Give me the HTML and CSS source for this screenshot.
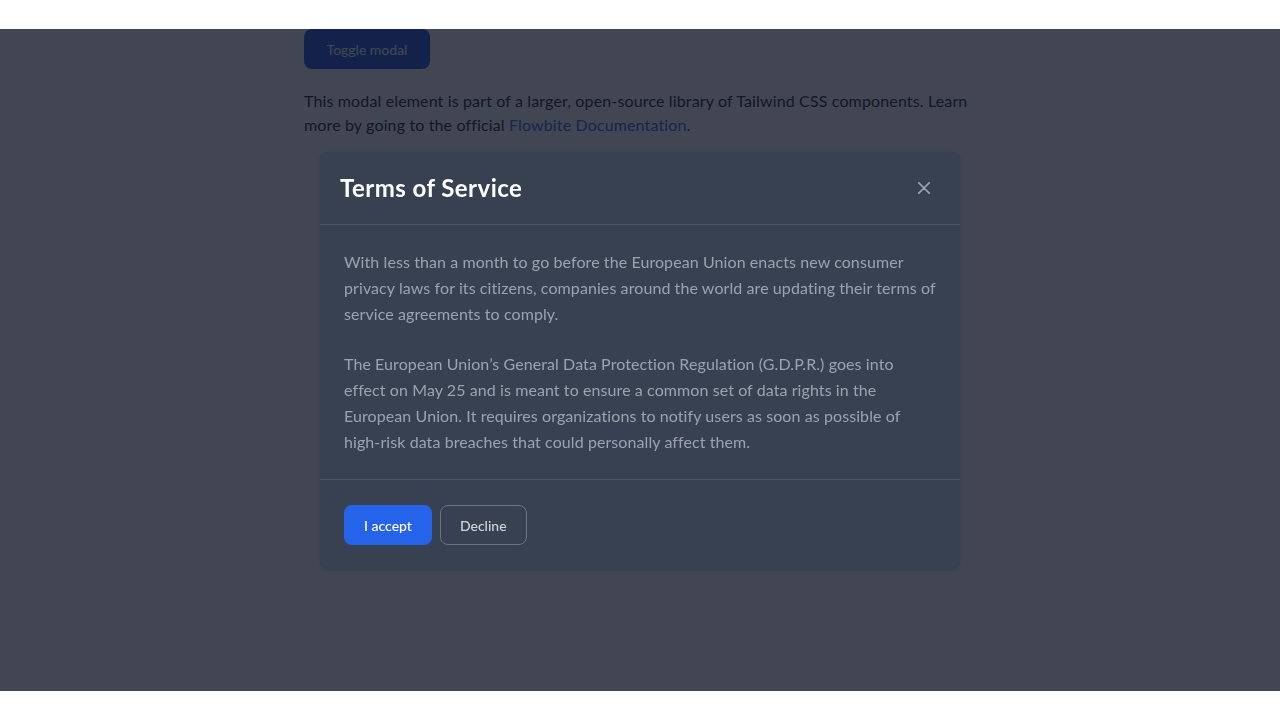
FILE: index.html
```html
<!DOCTYPE html>
<html lang="en">
<head>
    <meta charset="UTF-8">
    <meta name="viewport" content="width=device-width, initial-scale=1.0">
    <title>Terms of Service modal</title>
    <link rel="stylesheet" href="styles.css">
</head>
<body>
    <main class="page">
        <button class="btn btn-toggle" type="button">Toggle modal</button>
        <p class="intro">
            This modal element is part of a larger, open-source library of Tailwind CSS components. Learn
            more by going to the official <a href="#">Flowbite Documentation</a>.
        </p>
    </main>

    <div class="backdrop">
        <div class="modal">
            <div class="modal-header">
                <h3>Terms of Service</h3>
                <button class="close-btn" type="button" aria-label="Close modal">
                    <svg viewBox="0 0 14 14" width="12" height="12" fill="none">
                        <path d="M1 1l6 6m0 0l6 6M7 7l6-6M7 7l-6 6" stroke="currentColor" stroke-width="2" stroke-linecap="round" stroke-linejoin="round"/>
                    </svg>
                </button>
            </div>
            <div class="modal-body">
                <p>With less than a month to go before the European Union enacts new consumer privacy laws for its citizens, companies around the world are updating their terms of service agreements to comply.</p>
                <p>The European Union’s General Data Protection Regulation (G.D.P.R.) goes into effect on May 25 and is meant to ensure a common set of data rights in the European Union. It requires organizations to notify users as soon as possible of high-risk data breaches that could personally affect them.</p>
            </div>
            <div class="modal-footer">
                <button class="btn btn-primary" type="button">I accept</button>
                <button class="btn btn-outline" type="button">Decline</button>
            </div>
        </div>
    </div>
</body>
</html>
```

FILE: styles.css
```css
* {
    margin: 0;
    padding: 0;
    box-sizing: border-box;
}

body {
    font-family: Lato, "Liberation Sans", sans-serif;
    letter-spacing: 0.14px;
    background: #ffffff;
    color: #111827;
    min-height: 100vh;
}

.page {
    max-width: 672px;
    margin: 0 auto;
    padding-top: 29px;
}

.btn {
    font-family: inherit;
    font-size: 14px;
    font-weight: 500;
    letter-spacing: 0;
    height: 40px;
    padding: 0 19px;
    border-radius: 8px;
    border: 1px solid transparent;
    cursor: pointer;
}

.btn-toggle {
    background: #1d4ed8;
    color: #ffffff;
    font-weight: 400;
    width: 126px;
}

.intro {
    margin-top: 20px;
    font-size: 16px;
    line-height: 24px;
    color: #111827;
}

.intro a {
    color: #2563eb;
    text-decoration: none;
}

.backdrop {
    position: fixed;
    top: 29px;
    bottom: 29px;
    left: 0;
    right: 0;
    padding-top: 1px;
    background: rgba(17, 24, 39, 0.8);
    display: flex;
    align-items: center;
    justify-content: center;
}

.modal {
    width: 640px;
    background: #374151;
    border-radius: 8px;
    box-shadow: 0 1px 3px rgba(0, 0, 0, 0.1), 0 1px 2px rgba(0, 0, 0, 0.06);
}

.modal-header {
    display: flex;
    align-items: center;
    justify-content: space-between;
    padding: 20px;
    border-bottom: 1px solid #4b5563;
}

.modal-header h3 {
    font-size: 24px;
    line-height: 32px;
    font-weight: 700;
    letter-spacing: 0.45px;
    color: #ffffff;
}

.close-btn {
    width: 32px;
    height: 32px;
    border: none;
    border-radius: 8px;
    background: transparent;
    color: #9ca3af;
    display: flex;
    align-items: center;
    justify-content: center;
    cursor: pointer;
}

.modal-body {
    padding: 24px;
    display: flex;
    flex-direction: column;
    gap: 24px;
}

.modal-body p {
    font-size: 16px;
    line-height: 26px;
    letter-spacing: 0.085px;
    color: #9ca3af;
}

.modal-footer {
    display: flex;
    align-items: center;
    gap: 8px;
    padding: 25px 24px 24px;
    border-top: 1px solid #4b5563;
}

.btn-primary {
    background: #2563eb;
    color: #ffffff;
}

.btn-outline {
    background: #374151;
    color: #d1d5db;
    border-color: #6b7280;
}
```
